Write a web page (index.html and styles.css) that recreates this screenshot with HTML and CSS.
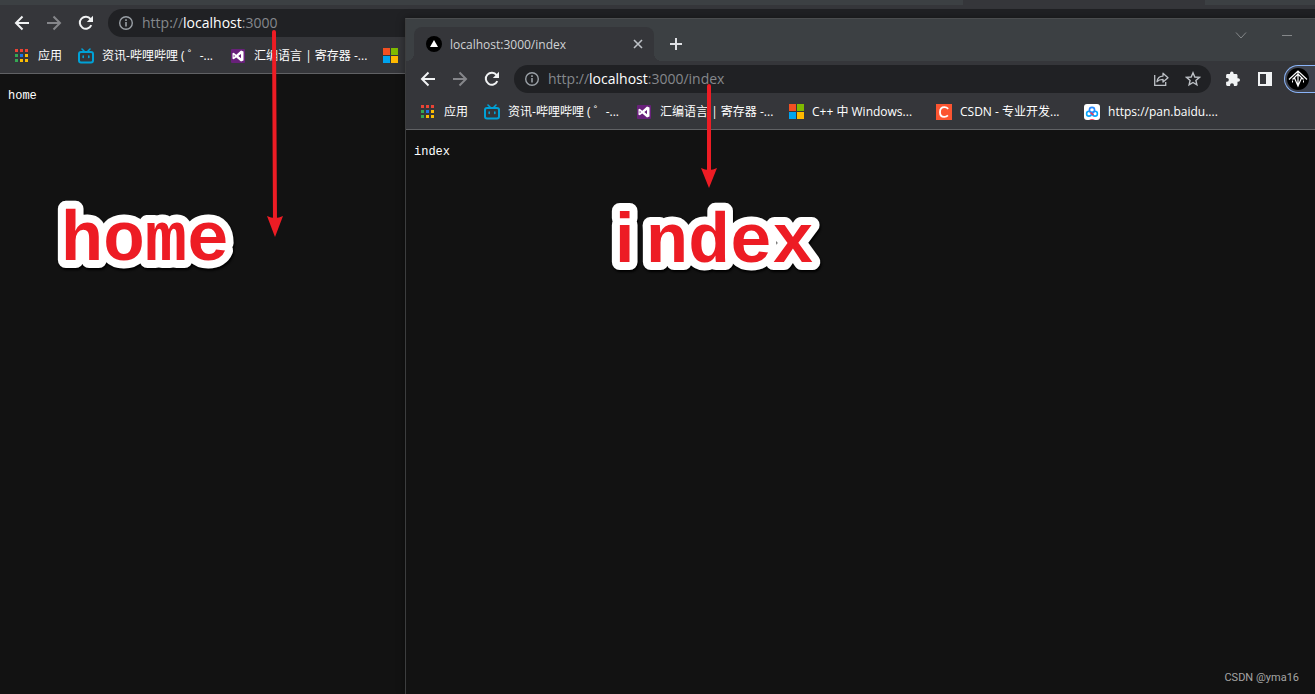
FILE: index.html
```html
<!DOCTYPE html>
<html lang="zh-CN">
<head>
<meta charset="utf-8">
<title>localhost:3000</title>
<link rel="stylesheet" href="styles.css">
</head>
<body>
<svg class="defs" aria-hidden="true">
  <defs>
    <symbol id="i-back" viewBox="0 0 16 16"><path d="M15 8H2M8.500 1.500L2 8l6.500 6.500" fill="none" stroke="currentColor" stroke-width="2"/></symbol>
    <symbol id="i-forward" viewBox="0 0 16 16"><path d="M1 8h13M7.500 1.500L14 8l-6.500 6.500" fill="none" stroke="currentColor" stroke-width="2"/></symbol>
    <symbol id="i-reload" viewBox="0 0 16 16"><path d="M13.300 10.200A6 6 0 1 1 12.600 4.100" fill="none" stroke="currentColor" stroke-width="2"/><path d="M15 .8V7H8.800z" fill="currentColor"/></symbol>
    <symbol id="i-info" viewBox="0 0 16 16"><circle cx="8" cy="8" r="6.300" fill="none" stroke="currentColor" stroke-width="1.400"/><path d="M7.200 7h1.600v4.500H7.200zM7.200 4.300h1.600v1.600H7.200z" fill="currentColor"/></symbol>
    <symbol id="i-apps" viewBox="0 0 16 16"><path fill="#ea4335" d="M1 1h3v3H1zM6 1h3v3H6zM11 1h3v3h-3z"/><path fill="#34a853" d="M1 6h3v3H1zM1 11h3v3H1z"/><path fill="#1a73e8" d="M6 6h3v3H6z"/><path fill="#fbbc04" d="M11 6h3v3h-3zM6 11h3v3H6zM11 11h3v3h-3z"/></symbol>
    <symbol id="i-bili" viewBox="0 0 16 16"><g fill="none" stroke="#00a1d6" stroke-linecap="round"><rect x="1" y="4" width="14" height="10.500" rx="2" stroke-width="2"/><path d="M4 1l2 2M12 1l-2 2" stroke-width="1.600"/><path d="M5.200 8v1.500M10.800 8v1.500" stroke-width="1.600"/></g></symbol>
    <symbol id="i-vs" viewBox="0 0 16 16"><rect x="1" y="1" width="14" height="14" rx="1" fill="#68217a"/><path d="M11 2.500l2.500 1v9L11 13.500 6.300 9.400 3.700 11.300 2.500 10.700V5.300L3.700 4.700l2.600 2L11 2.500zM11 6L8.300 8 11 10.200zM3.700 6.700v2.600L5 8z" fill="#fff" fill-rule="evenodd"/></symbol>
    <symbol id="i-ms" viewBox="0 0 16 16"><path fill="#f25022" d="M1 0h7v7H1z"/><path fill="#7fba00" d="M9 0h7v7H9z"/><path fill="#00a4ef" d="M1 8h7v7H1z"/><path fill="#ffb900" d="M9 8h7v7H9z"/></symbol>
    <symbol id="i-csdn" viewBox="0 0 16 16"><path fill="#fc5531" d="M0 0h16v16H0z"/><path d="M12.200 4.800C11 3.600 10 3.200 8.500 3.200 5.800 3.200 4 5.200 4 8.200c0 2.700 1.600 4.600 4.200 4.600 1.500 0 2.800-.5 3.700-1.500" fill="none" stroke="#fff" stroke-width="1.800"/></symbol>
    <symbol id="i-pan" viewBox="0 0 16 16"><rect width="16" height="16" rx="3" fill="#fff"/><g fill="none" stroke-width="1.600"><circle cx="5" cy="9.700" r="2.400" stroke="#06a7ff"/><circle cx="11" cy="9.700" r="2.400" stroke="#06a7ff"/><circle cx="8" cy="6" r="2.600" stroke="#2a8cff"/><path d="M6.500 8.500l3 2.600" stroke="#f0385a"/></g><path d="M5 16q3-2 6 0z" fill="#f0385a"/></symbol>
    <symbol id="i-share" viewBox="0 0 16 16"><path d="M1.700 4v10.300h11V11" fill="none" stroke="currentColor" stroke-width="1.300"/><path d="M4 10.700C4.500 7 6.500 5.200 10 5.100V2.200l5 4.500-5 4.400V8.300c-2.800 0-4.500.6-6 2.400z" fill="none" stroke="currentColor" stroke-width="1.300" stroke-linejoin="round"/></symbol>
    <symbol id="i-star" viewBox="0 0 16 16"><path d="M8 1.800l1.800 4.200 4.600.4-3.500 3 1 4.500L8 11.500l-3.900 2.400 1-4.500-3.500-3 4.600-.4z" fill="none" stroke="currentColor" stroke-width="1.400"/></symbol>
    <symbol id="i-puzzle" viewBox="0 0 16 16"><path d="M13.200 7.200h-.7V4.500c0-.8-.6-1.400-1.400-1.400H8.600v-.7a1.800 1.800 0 0 0-3.600 0v.7H2.500c-.8 0-1.400.6-1.400 1.400v2.400h.8a1.900 1.900 0 0 1 0 3.900h-.8v2.700c0 .8.600 1.400 1.400 1.400h2.600v-.8a1.900 1.900 0 0 1 3.800 0v.8h2.200c.8 0 1.400-.6 1.400-1.400v-2.700h.7a1.800 1.800 0 0 0 0-3.600z" fill="currentColor"/></symbol>
    <symbol id="i-panel" viewBox="0 0 16 16"><path d="M1 1h14v14H1zM3 3v10h6V3z" fill="currentColor" fill-rule="evenodd"/></symbol>
    <symbol id="i-avatar" viewBox="0 0 22 22"><circle cx="11" cy="11" r="11" fill="#000"/><g fill="none" stroke="#fff" stroke-width="1.200"><path d="M2 11.500L11 3l9 8.500M5.500 11.500L11 6l5.500 5.500M11 3v14M7.500 10L11 18l3.500-8"/><path d="M5.500 12.500v2M16.500 12.500v2" stroke-width="1"/></g></symbol>
    <symbol id="i-site" viewBox="0 0 16 16"><circle cx="8" cy="8" r="8" fill="#000"/><path d="M8 4l4 7H4z" fill="#fff"/></symbol>
    <symbol id="i-close" viewBox="0 0 16 16"><path d="M4 4l8 8M12 4l-8 8" stroke="currentColor" stroke-width="1.600"/></symbol>
    <symbol id="i-plus" viewBox="0 0 16 16"><path d="M8 2v12M2 8h12" stroke="currentColor" stroke-width="2"/></symbol>
    <symbol id="i-chevron" viewBox="0 0 16 16"><path d="M3 5.500l5 5.500 5-5.500" fill="none" stroke="currentColor"/></symbol>
    <symbol id="i-min" viewBox="0 0 16 16"><path d="M3 8.500h10" stroke="currentColor"/></symbol>
  </defs>
</svg>

<main class="desktop">
  <section class="window window-back" aria-label="home">
    <div class="strip-edge"><span class="edge-tab"></span></div>
    <div class="toolbar">
      <button class="tool" aria-label="返回"><svg class="icon"><use href="#i-back"/></svg></button>
      <button class="tool dim" aria-label="前进"><svg class="icon"><use href="#i-forward"/></svg></button>
      <button class="tool" aria-label="刷新"><svg class="icon"><use href="#i-reload"/></svg></button>
      <div class="omnibox open">
        <svg class="icon"><use href="#i-info"/></svg>
        <div class="url" role="textbox" contenteditable="true" spellcheck="false" aria-label="网址">http://<span class="host">localhost</span>:3000</div>
      </div>
    </div>
    <nav class="bookmarks">
      <a href="#"><svg class="icon"><use href="#i-apps"/></svg>应用</a>
      <a href="#"><svg class="icon"><use href="#i-bili"/></svg><span class="mark">资讯-哔哩哔哩 (&nbsp;゜-...</span></a>
      <a href="#"><svg class="icon"><use href="#i-vs"/></svg><span class="mark">汇编语言 | 寄存器 -...</span></a>
      <a href="#" aria-label="Windows"><svg class="icon"><use href="#i-ms"/></svg></a>
    </nav>
    <div class="page">home</div>
  </section>

  <section class="window window-front" aria-label="index">
    <div class="tabstrip">
      <div class="tab">
        <svg class="icon"><use href="#i-site"/></svg>
        <span class="tab-title">localhost:3000/index</span>
        <button class="tool soft" aria-label="关闭"><svg class="icon"><use href="#i-close"/></svg></button>
      </div>
      <button class="tool new-tab" aria-label="新标签页"><svg class="icon"><use href="#i-plus"/></svg></button>
      <div class="caption">
        <button class="tool" aria-label="搜索标签页"><svg class="icon"><use href="#i-chevron"/></svg></button>
        <button class="tool" aria-label="最小化"><svg class="icon"><use href="#i-min"/></svg></button>
      </div>
    </div>
    <div class="toolbar">
      <button class="tool" aria-label="返回"><svg class="icon"><use href="#i-back"/></svg></button>
      <button class="tool dim" aria-label="前进"><svg class="icon"><use href="#i-forward"/></svg></button>
      <button class="tool" aria-label="刷新"><svg class="icon"><use href="#i-reload"/></svg></button>
      <div class="omnibox">
        <svg class="icon"><use href="#i-info"/></svg>
        <div class="url" role="textbox" contenteditable="true" spellcheck="false" aria-label="网址">http://<span class="host">localhost</span>:3000/index</div>
        <button class="tool soft" aria-label="分享"><svg class="icon"><use href="#i-share"/></svg></button>
        <button class="tool soft" aria-label="收藏"><svg class="icon"><use href="#i-star"/></svg></button>
      </div>
      <button class="tool" aria-label="扩展程序"><svg class="icon"><use href="#i-puzzle"/></svg></button>
      <button class="tool" aria-label="侧边栏"><svg class="icon"><use href="#i-panel"/></svg></button>
      <button class="profile" aria-label="个人资料"><svg class="avatar"><use href="#i-avatar"/></svg></button>
    </div>
    <nav class="bookmarks">
      <a href="#"><svg class="icon"><use href="#i-apps"/></svg>应用</a>
      <a href="#"><svg class="icon"><use href="#i-bili"/></svg><span class="mark">资讯-哔哩哔哩 (&nbsp;゜-...</span></a>
      <a href="#"><svg class="icon"><use href="#i-vs"/></svg><span class="mark">汇编语言 | 寄存器 -...</span></a>
      <a href="#"><svg class="icon"><use href="#i-ms"/></svg><span class="mark mark-short">C++ 中 Windows...</span></a>
      <a href="#"><svg class="icon"><use href="#i-csdn"/></svg><span class="mark mark-short">CSDN - 专业开发...</span></a>
      <a href="#"><svg class="icon"><use href="#i-pan"/></svg><span class="mark">https://pan.baidu....</span></a>
    </nav>
    <div class="page">index</div>
    <footer class="credit">CSDN @yma16</footer>
  </section>

  <svg class="notes" width="840" height="290" viewBox="0 0 840 290">
    <g class="arrow">
      <path class="shaft" d="M274 32L275 222M709 86V173"/>
      <path d="M267 216Q275 220 283 216L275 237zM701 168Q709 172 717 168L709 188z"/>
    </g>
    <text class="label" x="61" y="260">home</text>
    <text class="label" x="603" y="262"><tspan class="plain" x="615">i</tspan><tspan x="646">ndex</tspan></text>
  </svg>
</main>
</body>
</html>
```
FILE: styles.css
```css
* {
  box-sizing: border-box;
}

body {
  margin: 0;
  background: #121212;
  font: 12px/16px "Open Sans", "Noto Sans CJK SC", sans-serif;
  color: #fff;
}

.defs {
  position: absolute;
  width: 0;
  height: 0;
}

.desktop {
  position: relative;
  height: 100vh;
  overflow: hidden;
}

.window {
  position: absolute;
  display: flex;
  flex-direction: column;
  overflow: hidden;
  background: #121212;
}

.window-back {
  inset: 0;
}

.window-front {
  inset: 18px 0 0 405px;
  border-top: 1px solid #4b4d4f;
  border-left: 1px solid #3c3d3e;
  box-shadow: 0 0 8px rgba(0, 0, 0, 0.4);
}

.icon {
  flex: none;
  display: block;
  width: 16px;
  height: 16px;
}

.tool {
  flex: none;
  padding: 0;
  border: 0;
  background: none;
  color: #f1f3f4;
}

.dim {
  color: #85868a;
}

.soft {
  color: #bdc1c6;
}

.strip-edge {
  display: flex;
  flex: none;
  justify-content: flex-end;
  height: 5px;
  padding-right: 110px;
  background: #3c4043;
}

.edge-tab {
  width: 242px;
  background: #35363a;
}

.tabstrip {
  display: flex;
  flex: none;
  height: 42px;
  padding: 8px 20px 0 8px;
  background: #3c4043;
}

.tab {
  position: relative;
  display: flex;
  align-items: center;
  gap: 8px;
  width: 240px;
  padding: 0 8px 0 12px;
  border-radius: 8px 8px 0 0;
  background: #35363a;
}

.tab::before,
.tab::after {
  content: "";
  position: absolute;
  bottom: 0;
  width: 8px;
  height: 8px;
}

.tab::before {
  right: 100%;
  background: radial-gradient(circle at 0 0, #3c4043 8px, #35363a 8px);
}

.tab::after {
  left: 100%;
  background: radial-gradient(circle at 100% 0, #3c4043 8px, #35363a 8px);
}

.tab-title {
  flex: 1;
  padding-top: 2px;
  color: #d0d2d5;
}

.new-tab {
  margin-left: 14px;
  color: #dfe1e5;
}

.caption {
  display: flex;
  gap: 30px;
  height: 12px;
  margin-left: auto;
}

.caption .tool {
  color: #85888a;
}

.toolbar {
  display: flex;
  flex: none;
  align-items: center;
  gap: 16px;
  padding: 4px 0 0 14px;
  background: #35363a;
}

.omnibox {
  display: flex;
  flex: 1;
  align-items: center;
  gap: 8px;
  height: 28px;
  padding: 0 10px;
  margin: 0 -2px;
  border-radius: 14px;
  background: #202124;
  color: #9aa0a6;
}

.omnibox.open {
  margin-right: 0;
  border-radius: 14px 0 0 14px;
}

.url {
  flex: 1;
  font-size: 14px;
  line-height: 20px;
  color: #85888c;
  white-space: nowrap;
}

.host {
  color: #fff;
}

.omnibox .tool + .tool {
  margin-left: 8px;
}

.profile {
  width: 31px;
  height: 28px;
  padding: 2px;
  margin-left: -5px;
  border: 1px solid #8ab4f8;
  border-right: 0;
  border-radius: 14px 0 0 14px;
  background: #3e424d;
}

.avatar {
  display: block;
  width: 22px;
  height: 22px;
}

.bookmarks {
  display: flex;
  flex: none;
  align-items: center;
  gap: 16px;
  height: 37px;
  padding: 1px 0 0 14px;
  border-bottom: 1px solid #606164;
  background: #35363a;
}

.bookmarks a {
  display: flex;
  flex: none;
  align-items: center;
  gap: 8px;
  color: #fff;
  text-decoration: none;
  white-space: nowrap;
}

.mark {
  width: 112px;
}

.mark-short {
  width: 108px;
}

.page {
  flex: 1;
  padding: 14px 8px;
  font-family: "Liberation Mono", monospace;
}

.credit {
  padding: 0 16px 8px;
  font: 11px/16px Roboto, sans-serif;
  color: #a5a5a5;
  text-align: right;
}

.notes {
  position: absolute;
  top: 0;
  left: 0;
  pointer-events: none;
}

.arrow {
  fill: #ed1c24;
}

.shaft {
  stroke: #ed1c24;
  stroke-width: 4px;
  stroke-linecap: round;
}

.label {
  fill: #ed1c24;
  stroke: #fff;
  stroke-width: 16px;
  stroke-linejoin: round;
  paint-order: stroke;
  font: bold 70px "Liberation Mono", monospace;
  filter: drop-shadow(1px 2px 1px #000);
}

.plain {
  font-family: "Liberation Sans", sans-serif;
}
```
